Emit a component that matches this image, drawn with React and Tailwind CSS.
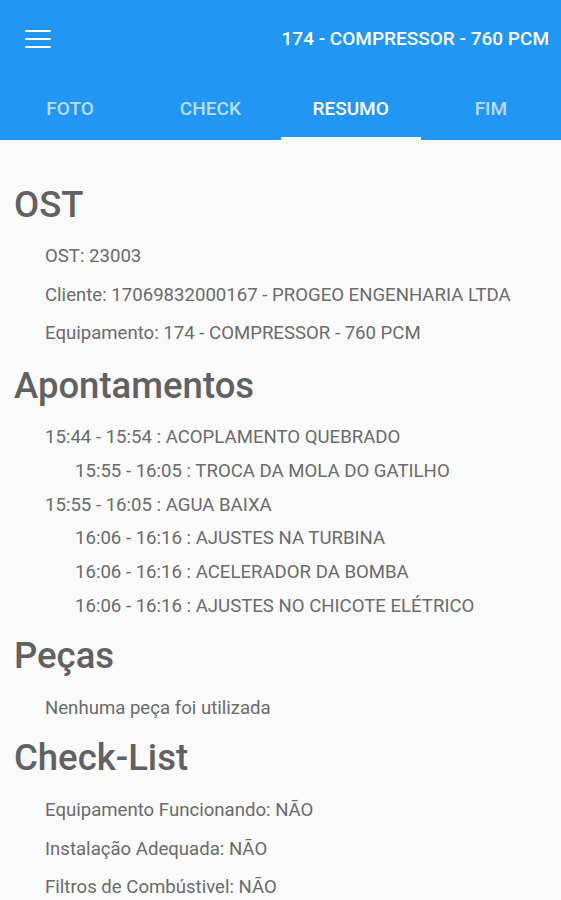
import React from "react";

const tabs = ["FOTO", "CHECK", "RESUMO", "FIM"];

const apontamentos = [
  { text: "15:44 - 15:54 : ACOPLAMENTO QUEBRADO", sub: false },
  { text: "15:55 - 16:05 : TROCA DA MOLA DO GATILHO", sub: true },
  { text: "15:55 - 16:05 : AGUA BAIXA", sub: false },
  { text: "16:06 - 16:16 : AJUSTES NA TURBINA", sub: true },
  { text: "16:06 - 16:16 : ACELERADOR DA BOMBA", sub: true },
  { text: "16:06 - 16:16 : AJUSTES NO CHICOTE ELÉTRICO", sub: true },
];

function Heading({ children, className = "" }) {
  return (
    <h2 className={`h-[62px] flex items-center pl-[14px] text-[36.5px] font-medium text-[#616161] ${className}`}>
      {children}
    </h2>
  );
}

function Item({ children }) {
  return (
    <p className="h-[38.5px] flex items-center pt-[4px] pl-[45px] text-[18.6px] text-[#6b6b6b]">{children}</p>
  );
}

export default function App() {
  return (
    <div className="w-[561px] h-[900px] overflow-hidden bg-[#fafafa] font-['Roboto',sans-serif]">
      <header className="bg-[#2196f3]">
        <div className="h-[78px] flex items-center justify-between pl-[25px] pr-[12px]">
          <button className="flex flex-col gap-[5.5px] w-[26px]">
            <span className="h-[2.5px] bg-white rounded-sm" />
            <span className="h-[2.5px] bg-white rounded-sm" />
            <span className="h-[2.5px] bg-white rounded-sm" />
          </button>
          <span className="text-white text-[19px] font-medium">174 - COMPRESSOR - 760 PCM</span>
        </div>
        <nav className="grid grid-cols-4 h-[62px]">
          {tabs.map((t) => (
            <div
              key={t}
              className={`flex items-center justify-center text-[19px] font-medium relative ${
                t === "RESUMO" ? "text-white" : "text-white/70"
              }`}
            >
              {t}
              {t === "RESUMO" && <span className="absolute left-0 right-0 bottom-0 h-[3px] bg-white" />}
            </div>
          ))}
        </nav>
      </header>

      <main className="pt-[34px]">
        <Heading>OST</Heading>
        <Item>OST: 23003</Item>
        <Item>Cliente: 17069832000167 - PROGEO ENGENHARIA LTDA</Item>
        <Item>Equipamento: 174 - COMPRESSOR - 760 PCM</Item>

        <Heading className="mt-[3.5px]">Apontamentos</Heading>
        <div className="mt-[2px]">
          {apontamentos.map((a, i) => (
            <p
              key={i}
              className={`h-[33.8px] flex items-center pt-[4px] text-[18.6px] text-[#6b6b6b] ${a.sub ? "pl-[75px]" : "pl-[45px]"}`}
            >
              {a.text}
            </p>
          ))}
        </div>

        <Heading className="mt-[4px]">Peças</Heading>
        <Item>Nenhuma peça foi utilizada</Item>

        <Heading className="mt-[1.5px]">Check-List</Heading>
        <Item>Equipamento Funcionando: NÃO</Item>
        <Item>Instalação Adequada: NÃO</Item>
        <Item>Filtros de Combústivel: NÃO</Item>
      </main>
    </div>
  );
}
